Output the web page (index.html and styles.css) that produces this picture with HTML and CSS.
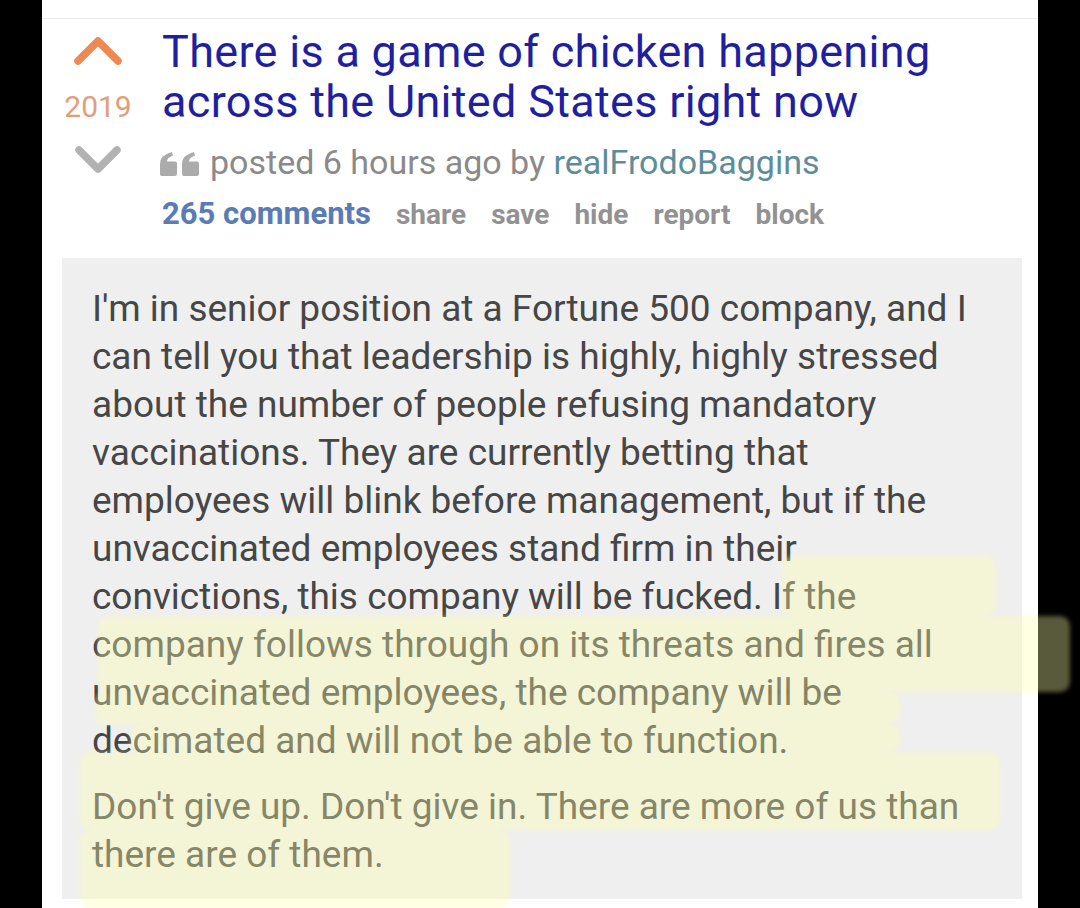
FILE: index.html
```html
<!DOCTYPE html>
<html lang="en">
<head>
    <meta charset="UTF-8">
    <meta name="viewport" content="width=device-width, initial-scale=1.0">
    <title>There is a game of chicken happening across the United States right now</title>
    <link rel="stylesheet" href="styles.css">
</head>
<body>
    <div class="screen">
        <div class="post">
            <div class="vote">
                <svg class="arrow up" width="50" height="30" viewBox="0 0 50 30">
                    <polyline points="5,25 25,5 45,25" />
                </svg>
                <span class="score">2019</span>
                <svg class="arrow down" width="50" height="30" viewBox="0 0 50 30">
                    <polyline points="6,5 25,24 44,5" />
                </svg>
            </div>
            <div class="entry">
                <a class="title" href="#">There is a game of chicken happening across the United States right now</a>
                <div class="tagline">
                    <svg class="quote" width="40" height="24" viewBox="0 0 40 24">
                        <path d="M2 24 Q0 24 0 22 V12 Q0 3 12 0 L13 3.5 Q7 5.5 7 9.5 H15 Q17 9.5 17 11.5 V22 Q17 24 15 24 Z" />
                        <path d="M24 24 Q22 24 22 22 V12 Q22 3 34 0 L35 3.5 Q29 5.5 29 9.5 H37 Q39 9.5 39 11.5 V22 Q39 24 37 24 Z" />
                    </svg>
                    <span>posted 6 hours ago by <a class="author" href="#">realFrodoBaggins</a></span>
                </div>
                <ul class="buttons">
                    <li><a class="comments" href="#">265 comments</a></li>
                    <li><a href="#">share</a></li>
                    <li><a href="#">save</a></li>
                    <li><a href="#">hide</a></li>
                    <li><a href="#">report</a></li>
                    <li><a href="#">block</a></li>
                </ul>
            </div>
        </div>
        <div class="selftext">
            <p>I'm in senior position at a Fortune 500 company, and I can tell you that leadership is highly, highly stressed about the number of people refusing mandatory vaccinations. They are currently betting that employees will blink before management, but if the unvaccinated employees stand firm in their convictions, this company will be fucked. If the company follows through on its threats and fires all unvaccinated employees, the company will be decimated and will not be able to function.</p>
            <p>Don't give up. Don't give in. There are more of us than there are of them.</p>
        </div>

        <!-- marker strokes drawn over the screenshot -->
        <div class="marker" style="left: 740px; top: 556px; width: 214px; height: 60px;"></div>
        <div class="marker" style="left: 56px; top: 616px; width: 972px; height: 76px;"></div>
        <div class="marker" style="left: 53px; top: 692px; width: 805px; height: 32px;"></div>
        <div class="marker" style="left: 88px; top: 724px; width: 770px; height: 28px;"></div>
        <div class="marker" style="left: 38px; top: 752px; width: 920px; height: 78px;"></div>
        <div class="marker" style="left: 38px; top: 830px; width: 430px; height: 78px;"></div>
    </div>
</body>
</html>
```

FILE: styles.css
```css
body {
    margin: 0;
    padding: 0;
    background-color: #000;
    font-family: Roboto, "Noto Sans", Arial, sans-serif;
    overflow: hidden;
}
a {
    text-decoration: none;
}
.screen {
    position: relative;
    width: 996px;
    height: 890px;
    margin-left: 42px;
    padding-top: 18px;
    background-color: #fff;
}
.post {
    display: flex;
    gap: 28px;
    padding-left: 20px;
    border-top: 1px solid #ebebeb;
}
.vote {
    width: 72px;
    display: flex;
    flex-direction: column;
    align-items: center;
    padding-top: 17px;
}
.arrow polyline {
    fill: none;
    stroke-width: 7.5;
    stroke-linecap: round;
    stroke-linejoin: round;
}
.arrow.up polyline {
    stroke: #ee8954;
}
.arrow.down polyline {
    stroke: #b2b2b2;
}
.score {
    margin-top: 24px;
    font-size: 30px;
    line-height: 34px;
    color: #e29e78;
}
.arrow.down {
    margin-top: 21px;
}
.entry {
    flex: 1;
    padding-top: 8px;
}
.title {
    display: block;
    font-size: 45px;
    line-height: 50px;
    letter-spacing: 0.3px;
    color: #1f1fa0;
}
.tagline {
    display: flex;
    align-items: center;
    gap: 10px;
    margin-top: 15px;
    font-size: 34px;
    line-height: 40px;
    color: #8a8a8a;
}
.quote {
    fill: #ababab;
    margin-left: -2px;
    margin-top: 3px;
}
.author {
    color: #5d8d98;
}
.buttons {
    list-style-type: none;
    display: flex;
    align-items: baseline;
    gap: 25px;
    margin: 14px 0 0;
    padding: 0;
    font-size: 28px;
    line-height: 36px;
    font-weight: bold;
}
.buttons a {
    color: #929292;
}
.buttons .comments {
    font-size: 31px;
    color: #5a7bb5;
}
.selftext {
    margin: 25px 16px 0 20px;
    padding: 27px 37px 20px 30px;
    background-color: #efefef;
    font-size: 37px;
    line-height: 48px;
    color: #464646;
}
.selftext p {
    margin: 0;
}
.selftext p + p {
    margin-top: 18px;
}
.marker {
    position: absolute;
    background-color: rgba(255, 255, 170, 0.35);
    border-radius: 10px;
    filter: blur(2px);
}
```
